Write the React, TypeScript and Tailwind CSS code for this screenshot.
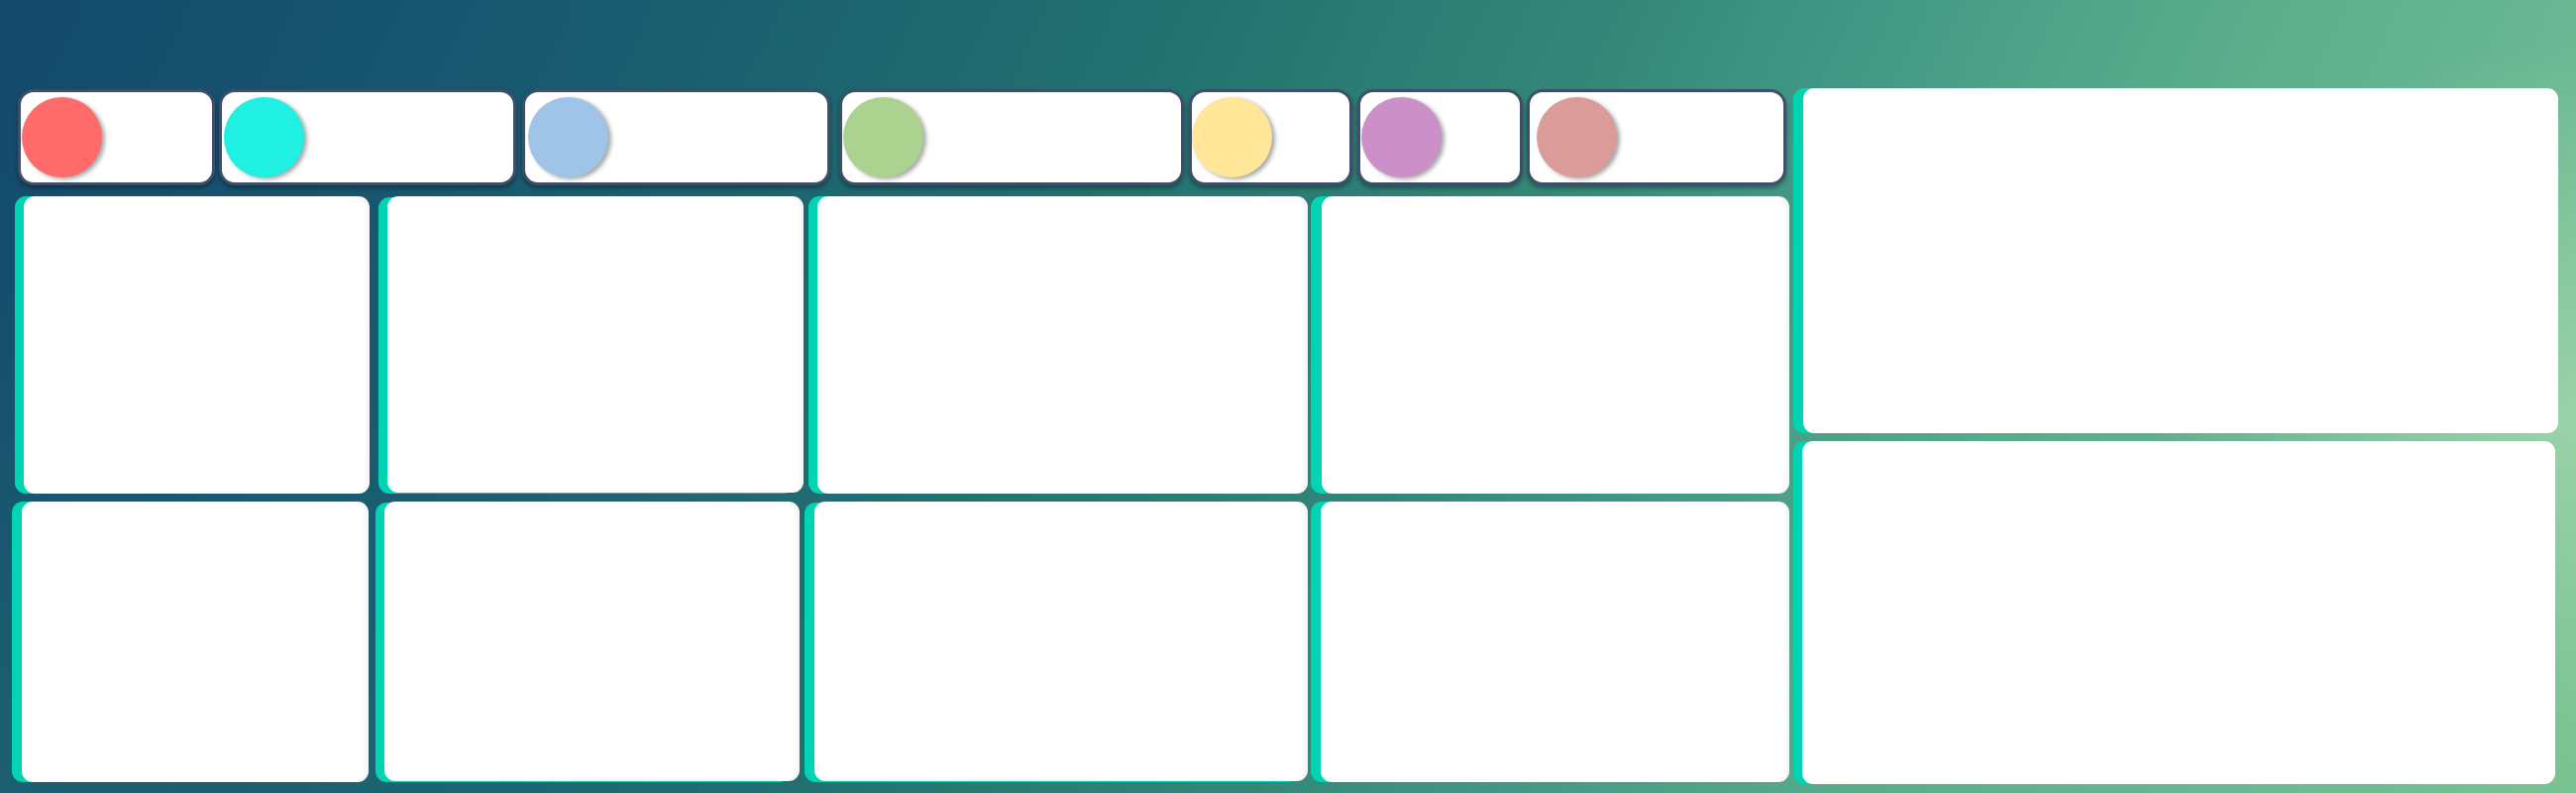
import React from "react";

type Pill = { w: number; ml: number; color: string; cml: number };

const pills: Pill[] = [
  { w: 199, ml: 18, color: "bg-[#ff6b6b]", cml: 1 },
  { w: 300, ml: 4, color: "bg-[#1ff0e1]", cml: 2 },
  { w: 311, ml: 6, color: "bg-[#a0c4e8]", cml: 3 },
  { w: 348, ml: 9, color: "bg-[#abd38f]", cml: 1 },
  { w: 165, ml: 5, color: "bg-[#ffe699]", cml: 0 },
  { w: 167, ml: 5, color: "bg-[#cc90c8]", cml: 1 },
  { w: 262, ml: 4, color: "bg-[#da9b99]", cml: 7 },
];

function PillBox({ p }: { p: Pill }) {
  return (
    <div
      className="h-[97px] shrink-0 rounded-[16px] border-[3px] border-[#3e4f6a] bg-white flex items-center shadow-[0_3px_4px_rgba(0,0,0,0.35)]"
      style={{ width: p.w, marginLeft: p.ml }}
    >
      <div
        className={`w-[81px] h-[81px] rounded-full ${p.color} shadow-[3px_2px_4px_rgba(0,0,0,0.35)]`}
        style={{ marginLeft: p.cml }}
      />
    </div>
  );
}

export default function App() {
  return (
    <div className="w-[2600px] h-[800px] overflow-hidden relative bg-[linear-gradient(115deg,#144a6b_0%,#185a70_20%,#22716f_40%,#348778_55%,#3f9584_62%,#58ab8a_75%,#6ab894_88%,#78c290_100%)]">
      <div className="absolute inset-0 bg-[radial-gradient(ellipse_420px_380px_at_100%_53%,rgba(175,222,180,0.65),rgba(175,222,180,0)_100%)]" />
      <div className="absolute inset-0 bg-[radial-gradient(ellipse_900px_520px_at_0%_100%,rgba(32,104,116,0.55),rgba(32,104,116,0)_100%)]" />
      <div className="relative flex items-start pt-[89px] font-['Liberation_Sans',sans-serif]">
        {/* Left section */}
        <div className="flex flex-col w-[1806px] shrink-0">
          <div className="flex items-start mt-[1px]">
            {pills.map((p, i) => (
              <PillBox key={i} p={p} />
            ))}
          </div>
          {/* Row 1 */}
          <div className="flex items-start mt-[11px] h-[300px]">
            <div className="ml-[24px] w-[349px] h-[300px] rounded-[11px] bg-white shadow-[-9px_0_0_#00d4b3,inset_-3px_0_5px_rgba(0,0,0,0.05)]" />
            <div className="ml-[18px] w-[420px] h-[299px] rounded-[11px] bg-white shadow-[-9px_1px_0_#00d4b3,inset_-3px_0_5px_rgba(0,0,0,0.05)]" />
            <div className="ml-[14px] w-[495px] h-[300px] rounded-[11px] bg-white shadow-[-9px_0_0_#00d4b3,inset_-3px_0_5px_rgba(0,0,0,0.05)]" />
            <div className="ml-[14px] w-[472px] h-[300px] rounded-[11px] bg-white shadow-[-11px_0_0_#00d4b3,inset_-3px_0_5px_rgba(0,0,0,0.05)]" />
          </div>
          {/* Row 2 */}
          <div className="flex items-start mt-[8px] h-[283px]">
            <div className="ml-[22px] w-[350px] h-[283px] rounded-[11px] bg-white shadow-[-10px_0_0_#00d4b3,inset_-3px_0_5px_rgba(0,0,0,0.05)]" />
            <div className="ml-[16px] w-[419px] h-[282px] rounded-[11px] bg-white shadow-[-9px_1px_0_#00d4b3,inset_-3px_0_5px_rgba(0,0,0,0.05)]" />
            <div className="ml-[15px] w-[498px] h-[282px] rounded-[11px] bg-white shadow-[-10px_1px_0_#00d4b3,inset_-3px_0_5px_rgba(0,0,0,0.05)]" />
            <div className="ml-[13px] w-[473px] h-[283px] rounded-[11px] bg-white shadow-[-10px_0_0_#00d4b3,inset_-3px_0_5px_rgba(0,0,0,0.05)]" />
          </div>
        </div>
        {/* Right column */}
        <div className="flex flex-col shrink-0">
          <div className="ml-[14px] w-[762px] h-[348px] rounded-[11px] bg-white shadow-[-10px_0_0_#00d4b3]" />
          <div className="ml-[13px] mt-[8px] w-[760px] h-[346px] rounded-[11px] bg-white shadow-[-9px_0_0_#00d4b3]" />
        </div>
      </div>
    </div>
  );
}
